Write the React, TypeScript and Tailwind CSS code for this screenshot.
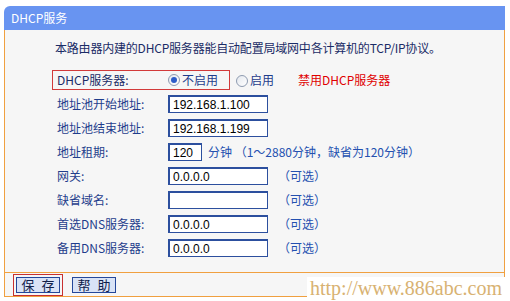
import React from 'react'

const font = { fontFamily: '"Noto Sans CJK SC", "Noto Sans", sans-serif' }

function Radio({ checked }: { checked?: boolean }) {
  return (
    <span className="inline-flex h-[12px] w-[12px] shrink-0 items-center justify-center rounded-full border border-[#8e9bb0] bg-gradient-to-br from-[#e4e8ee] to-white">
      {checked && <span className="h-[6px] w-[6px] rounded-full bg-[#2d5cc8]" />}
    </span>
  )
}

function Field({ label, value = '', width = 'w-[100px]', note }: { label: string; value?: string; width?: string; note?: React.ReactNode }) {
  return (
    <div className="flex h-[24px] items-center pl-[52px]">
      <div className="w-[111px] text-[12px] text-[#1f3d8c]">{label}</div>
      <input
        readOnly
        defaultValue={value}
        className={`${width} h-[18px] border border-[#2c4f9e] border-l-2 border-t-2 bg-white px-[3px] text-[12px] text-black outline-none`}
        style={{ fontFamily: '"Liberation Sans", Arial, sans-serif' }}
      />
      {note}
    </div>
  )
}

const Optional = <span className="ml-[10px] text-[12px] text-[#2450b0]">（可选）</span>

export default function App() {
  return (
    <div className="relative h-[301px] w-[510px] overflow-hidden bg-white" style={font}>
      <div className="ml-[4px] mt-[6px] w-[501px]">
        <div className="flex h-[24px] items-center rounded-tl-[6px] bg-[#6894f1] pl-[7px] text-[12px] text-white">
          DHCP服务
        </div>

        <div className="h-[242px] border-x border-[#f0a040] bg-[#f6f6f6] pt-[9px]">
          <div className="h-[18px] pl-[50px] text-[12px] leading-[18px] tracking-[-0.2px] text-[#1b2c66]">
            本路由器内建的DHCP服务器能自动配置局域网中各计算机的TCP/IP协议。
          </div>

          <div className="mt-[11px] flex h-[24px] items-center pl-[47px]">
            <div className="flex h-[20px] w-[178px] items-center border border-[#d23a3a] pl-[4px]">
              <div className="w-[111px] text-[12px] text-[#1b2c66]">DHCP服务器:</div>
              <Radio checked />
              <span className="ml-[2px] text-[12px] text-[#1f3d8c]">不启用</span>
            </div>
            <span className="ml-[6px]">
              <Radio />
            </span>
            <span className="ml-[2px] text-[12px] text-[#1f3d8c]">启用</span>
            <span className="ml-[24px] text-[12px] text-[#e00000]">禁用DHCP服务器</span>
          </div>

          <Field label="地址池开始地址:" value="192.168.1.100" />
          <Field label="地址池结束地址:" value="192.168.1.199" />
          <Field
            label="地址租期:"
            value="120"
            width="w-[34px]"
            note={<span className="ml-[6px] text-[12px] text-[#2450b0]">分钟 （1～2880分钟，缺省为120分钟）</span>}
          />
          <Field label="网关:" value="0.0.0.0" note={Optional} />
          <Field label="缺省域名:" note={Optional} />
          <Field label="首选DNS服务器:" value="0.0.0.0" note={Optional} />
          <Field label="备用DNS服务器:" value="0.0.0.0" note={Optional} />
        </div>

        <div className="flex h-[25px] items-center gap-[9px] border border-[#f0a040] bg-[#f6f6f6] pl-[8px]">
          <div className="border border-[#c83030] p-[2px]">
            <button className="flex h-[16px] w-[44px] items-center justify-center gap-[7px] border border-[#24479a] bg-[#d9e3f6] text-[13px] leading-none text-[#10204a]">
              <span>保</span>
              <span>存</span>
            </button>
          </div>
          <button className="flex h-[16px] w-[44px] items-center justify-center gap-[7px] border border-[#24479a] bg-[#d9e3f6] text-[13px] leading-none text-[#10204a]">
            <span>帮</span>
            <span>助</span>
          </button>
        </div>
      </div>

      <div
        className="absolute left-[307px] top-[277px] h-[24px] w-[203px] bg-white pl-[3px] text-[20px] leading-[22px] text-[#d8b272]"
        style={{ fontFamily: '"Liberation Serif", serif' }}
      >
        http://www.886abc.com
      </div>
    </div>
  )
}
